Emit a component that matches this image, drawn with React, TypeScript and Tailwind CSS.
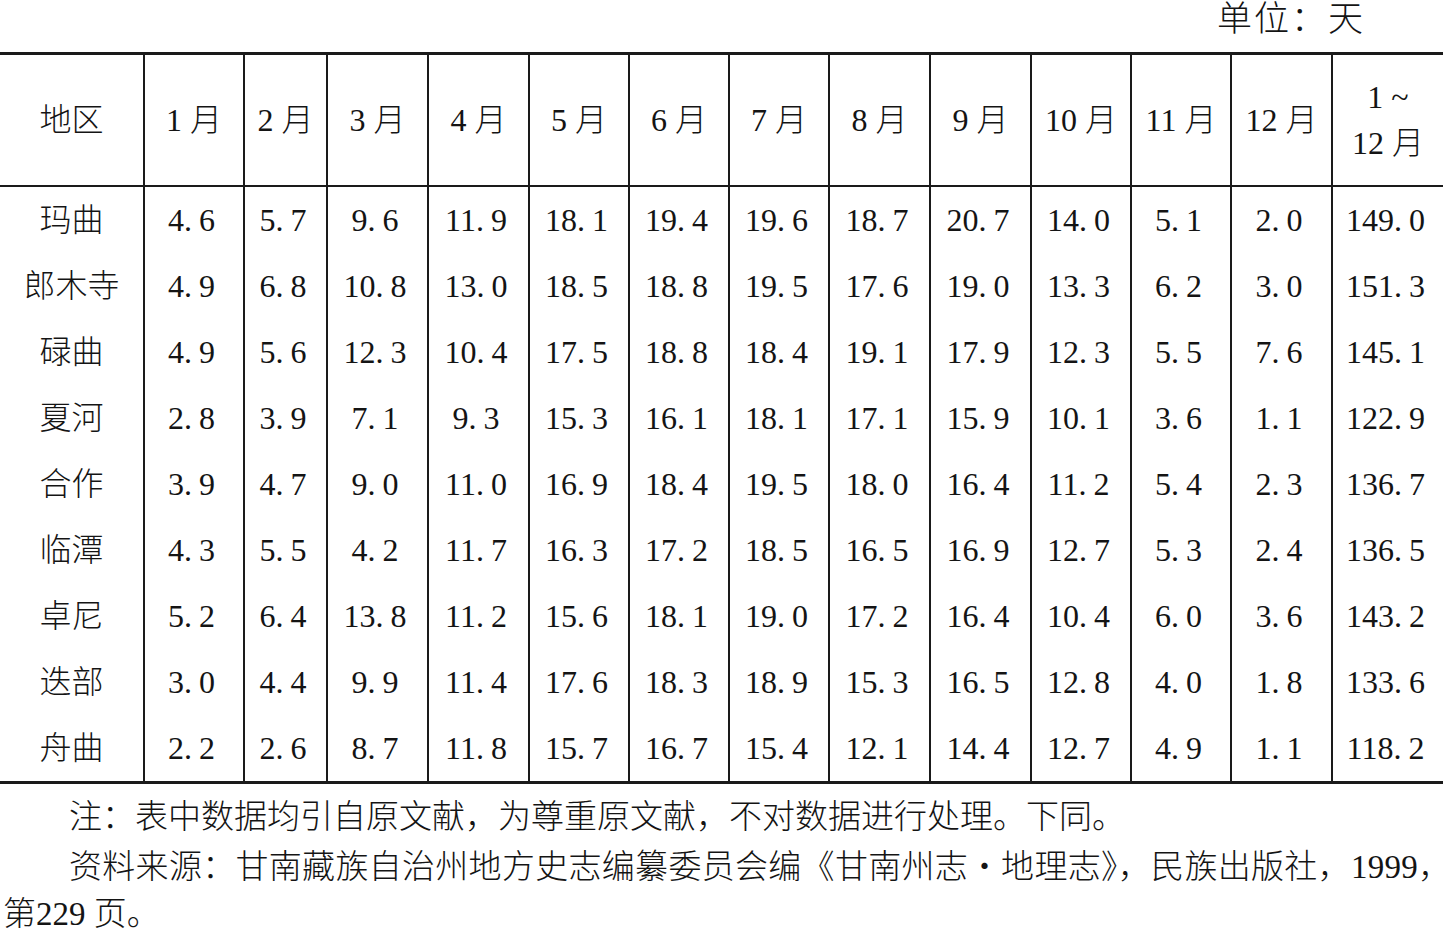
import React from "react";

const months = ["1 月", "2 月", "3 月", "4 月", "5 月", "6 月", "7 月", "8 月", "9 月", "10 月", "11 月", "12 月"];

const rows: [string, string[]][] = [
  ["玛曲", ["4.6", "5.7", "9.6", "11.9", "18.1", "19.4", "19.6", "18.7", "20.7", "14.0", "5.1", "2.0", "149.0"]],
  ["郎木寺", ["4.9", "6.8", "10.8", "13.0", "18.5", "18.8", "19.5", "17.6", "19.0", "13.3", "6.2", "3.0", "151.3"]],
  ["碌曲", ["4.9", "5.6", "12.3", "10.4", "17.5", "18.8", "18.4", "19.1", "17.9", "12.3", "5.5", "7.6", "145.1"]],
  ["夏河", ["2.8", "3.9", "7.1", "9.3", "15.3", "16.1", "18.1", "17.1", "15.9", "10.1", "3.6", "1.1", "122.9"]],
  ["合作", ["3.9", "4.7", "9.0", "11.0", "16.9", "18.4", "19.5", "18.0", "16.4", "11.2", "5.4", "2.3", "136.7"]],
  ["临潭", ["4.3", "5.5", "4.2", "11.7", "16.3", "17.2", "18.5", "16.5", "16.9", "12.7", "5.3", "2.4", "136.5"]],
  ["卓尼", ["5.2", "6.4", "13.8", "11.2", "15.6", "18.1", "19.0", "17.2", "16.4", "10.4", "6.0", "3.6", "143.2"]],
  ["迭部", ["3.0", "4.4", "9.9", "11.4", "17.6", "18.3", "18.9", "15.3", "16.5", "12.8", "4.0", "1.8", "133.6"]],
  ["舟曲", ["2.2", "2.6", "8.7", "11.8", "15.7", "16.7", "15.4", "12.1", "14.4", "12.7", "4.9", "1.1", "118.2"]],
];

function Num({ v }: { v: string }) {
  const [a, b] = v.split(".");
  return (
    <span className="mr-[5px]">
      {a}
      <span className="tracking-[7px]">.</span>
      {b}
    </span>
  );
}

const cols = "grid grid-cols-[143px_100px_83px_101px_101px_100px_100px_100px_101px_101px_100px_100px_101px_112px]";

export default function App() {
  return (
    <div
      className="w-[1443px] h-[933px] bg-white text-[#141414] overflow-hidden font-light"
      style={{ fontFamily: '"Liberation Serif", "Noto Sans CJK SC", serif' }}
    >
      <div className="h-[52px] flex items-center justify-end pr-[78px] text-[35px] leading-none pb-[14px] tracking-[2px]">
        单位：天
      </div>
      <div className="border-t-[3px] border-b-[3px] border-[#1a1a1a]">
        <div className={`${cols} h-[132px] border-b-2 border-[#1a1a1a] text-[32px]`}>
          <div className="flex items-center justify-center">地区</div>
          {months.map((m) => (
            <div key={m} className="flex items-center justify-center border-l-2 border-[#1a1a1a] whitespace-nowrap">
              {m}
            </div>
          ))}
          <div className="flex flex-col items-center justify-center border-l-2 border-[#1a1a1a] leading-[46px]">
            <span>1 ~</span>
            <span>12 月</span>
          </div>
        </div>
        {rows.map(([name, vals]) => (
          <div key={name} className={`${cols} h-[66px] text-[32px]`}>
            <div className="flex items-center justify-center">{name}</div>
            {vals.map((v, i) => (
              <div key={i} className="flex items-center justify-center border-l-2 border-[#1a1a1a] whitespace-nowrap">
                <Num v={v} />
              </div>
            ))}
          </div>
        ))}
      </div>
      <div className="pl-[3px] pt-[10px] text-[33px] leading-[47px] whitespace-nowrap">
        <div className="indent-[66px]">注：表中数据均引自原文献，为尊重原文献，不对数据进行处理。下同。</div>
        <div className="indent-[66px] tracking-[0.3px]">
          资料来源：甘南藏族自治州地方史志编纂委员会编《甘南州志
          <span className="inline-block w-[33px] indent-0 text-center" style={{ fontFamily: '"Noto Sans CJK SC", sans-serif' }}>·</span>
          地理志》，民族出版社，1999
          <span className="inline-block w-[12px] indent-0 tracking-normal">，</span>
        </div>
        <div>第229 页。</div>
      </div>
    </div>
  );
}
